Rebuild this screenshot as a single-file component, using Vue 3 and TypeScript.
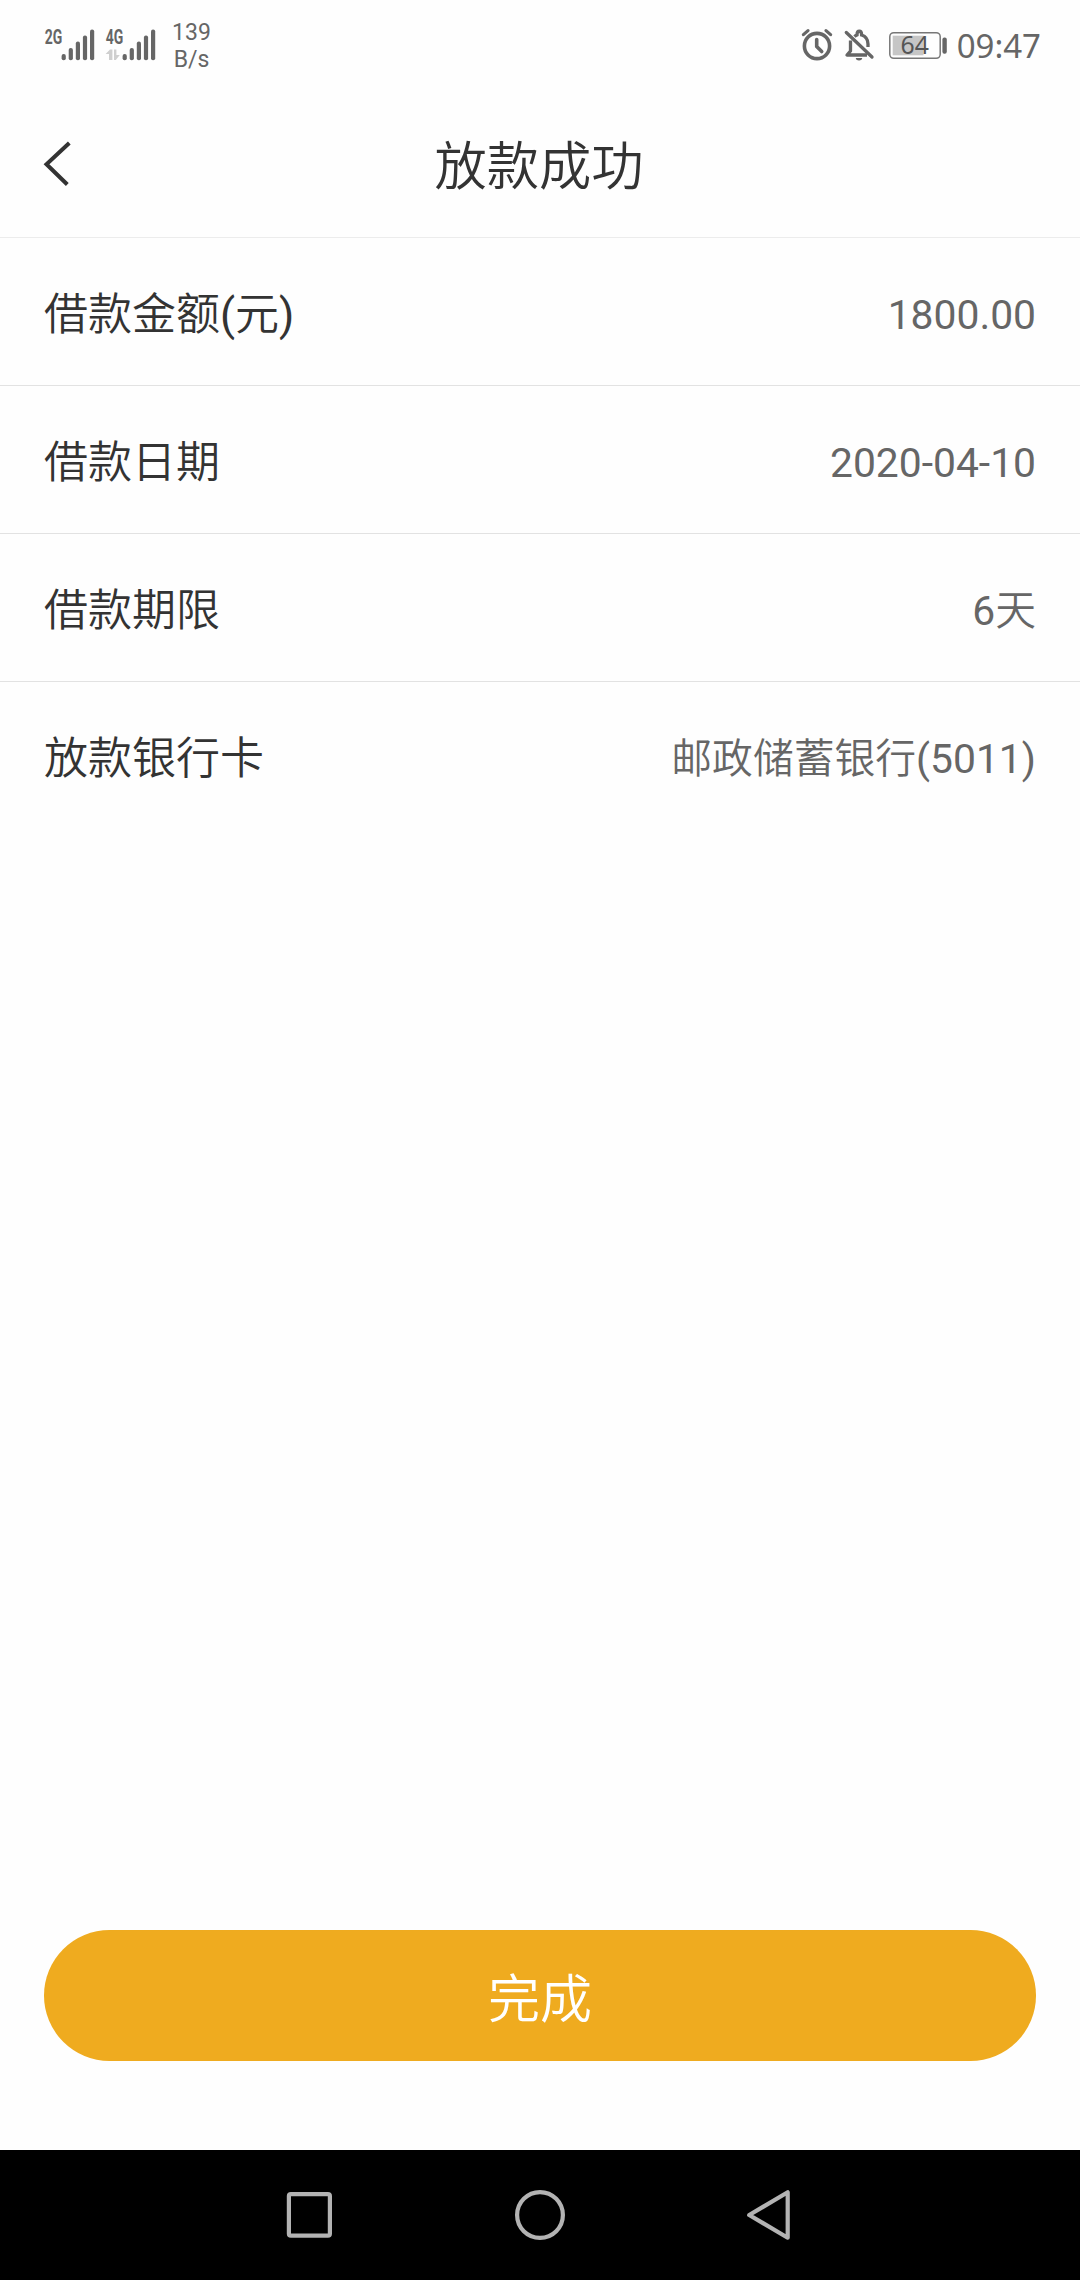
<script setup lang="ts">
interface Row {
  label: string
  value: string
}

interface Run {
  text: string
  latin: boolean
}

interface Signal {
  name: string
  data: boolean
}

const rows: Row[] = [
  { label: '借款金额(元)', value: '1800.00' },
  { label: '借款日期', value: '2020-04-10' },
  { label: '借款期限', value: '6天' },
  { label: '放款银行卡', value: '邮政储蓄银行(5011)' },
]

const signals: Signal[] = [
  { name: '2G', data: false },
  { name: '4G', data: true },
]

const barTops: number[] = [26, 20, 13.6, 7.4, 1.6]

// Latin runs are set in a slightly heavier weight than the Chinese ones.
function runs(text: string): Run[] {
  const parts = text.match(/[\x20-\x7e]+|[^\x20-\x7e]+/g) ?? []
  return parts.map((part) => ({ text: part, latin: part.charCodeAt(0) < 128 }))
}
</script>

<template>
  <div class="screen">
    <div class="status">
      <svg v-for="s in signals" :key="s.name" class="signal" width="61" height="46" viewBox="0 -10 61 46">
        <text x="0.8" y="15.6" textLength="17.5" lengthAdjust="spacingAndGlyphs">{{ s.name }}</text>
        <g v-if="s.data" fill="#cfcfcf">
          <path d="M5 21.5h2.4v10.5H4v-6H0.6z" />
          <path d="M9 21.5h2.4v5.5h3.4l-4 5H9z" />
        </g>
        <rect v-for="(t, i) in barTops" :key="t" :x="17.6 + i * 7.1" :y="t" width="4.2" :height="32.3 - t" rx="2" />
      </svg>
      <div class="speed"><span>139</span><span>B/s</span></div>
      <div class="right">
        <svg class="alarm" width="32" height="34" viewBox="801 28 32 34" fill="none" stroke="#666" stroke-width="3.6">
          <circle cx="817" cy="46" r="12.6" />
          <path d="M816.7 39.5v7l5 5" stroke-linecap="round" stroke-linejoin="round" />
          <path d="M803.4 34.6l4.6-4M830.6 34.6l-4.6-4" stroke-linecap="round" stroke-width="3.2" />
        </svg>
        <svg class="bell" width="32" height="34" viewBox="843 28 32 34" fill="none" stroke="#666" stroke-width="3.3">
          <path d="M850.5 40.5V51l-3.5 4h20" stroke-linejoin="round" />
          <path d="M854.5 36.6c0.8-0.8 1.5-1.2 2.5-1.6 0-5 4.6-5 4.6 0 4.5 1.5 6.4 4.3 6.4 9V47" />
          <path d="M846.3 32.5L872 57" stroke-linecap="round" />
          <path d="M855.8 58h6.4a3.2 2.4 0 0 1-6.4 0z" fill="#666" stroke="none" />
        </svg>
        <svg class="battery" width="60" height="46" viewBox="888 22 60 46">
          <rect x="889.8" y="32.7" width="50.4" height="25.6" rx="4" fill="none" stroke="#777" stroke-width="1.5" />
          <rect x="892.7" y="35.7" width="30.8" height="19.6" fill="#c6c6c6" />
          <rect x="942.4" y="37.6" width="4.4" height="16.2" rx="2" fill="#666" />
          <text x="900.5" y="53.8">64</text>
        </svg>
        <span class="time">09:47</span>
      </div>
    </div>
    <header class="header">
      <svg class="back" width="32" height="50" viewBox="40 139 32 50" fill="none" stroke="#333" stroke-width="4">
        <path d="M69.3 143L46.5 164.3L67.3 184.5" />
      </svg>
      <h1>放款成功</h1>
    </header>
    <main class="list">
      <div v-for="r in rows" :key="r.label" class="row">
        <span class="label"><span v-for="p in runs(r.label)" :key="p.text" :class="{ latin: p.latin }">{{ p.text }}</span></span>
        <span class="value"><span v-for="p in runs(r.value)" :key="p.text" :class="{ latin: p.latin }">{{ p.text }}</span></span>
      </div>
    </main>
    <button class="done">完成</button>
    <nav class="nav">
      <svg width="1080" height="130" viewBox="0 2150 1080 130" fill="none" stroke="#b3b3b3" stroke-width="4.2" stroke-linejoin="round">
        <rect x="288.9" y="2194.1" width="41" height="41.6" rx="2" />
        <circle cx="540" cy="2215" r="22.9" />
        <path d="M787.7 2192.3V2237.7L749.2 2215z" />
      </svg>
    </nav>
  </div>
</template>

<style>
body {
  margin: 0;
}
</style>

<style scoped>
.screen {
  width: 1080px;
  height: 2280px;
  display: flex;
  flex-direction: column;
  background: #fefefe;
  font-family: Roboto, "Noto Sans CJK SC", sans-serif;
  color: #333;
  overflow: hidden;
}
.status {
  height: 90px;
  display: flex;
  align-items: flex-start;
  padding: 0 39px 0 44px;
  color: #666;
}
.signal {
  margin-top: 18px;
  fill: #666;
  flex: none;
}
.signal text {
  font: 700 20px Roboto, sans-serif;
}
.speed {
  margin: 19px 0 0 -1.5px;
  width: 54px;
  display: flex;
  flex-direction: column;
  align-items: center;
  font-size: 23px;
  line-height: 27px;
}
.right {
  margin-left: auto;
  display: flex;
  align-items: flex-start;
}
.alarm,
.bell {
  margin-top: 28px;
}
.bell {
  margin-left: 10px;
}
.battery {
  margin: 22px 9px 0 13px;
}
.battery text {
  font: 24.8px "Noto Sans", sans-serif;
  fill: #555;
}
.time {
  margin-top: 26px;
  font-family: "Noto Sans", sans-serif;
  font-size: 33px;
  line-height: 40px;
}
.header {
  height: 147px;
  display: grid;
  grid-template-columns: 32px 1fr 34px;
  align-items: start;
  padding: 0 40px;
  border-bottom: 1px solid #ececec;
}
.back {
  margin-top: 49px;
}
h1 {
  margin: 38px 0 0;
  text-align: center;
  font-size: 52.3px;
  line-height: 78px;
  font-weight: 350;
}
.list {
  flex: 1;
}
.row {
  height: 148px;
  box-sizing: border-box;
  display: flex;
  justify-content: space-between;
  align-items: flex-start;
  padding: 5px 44px 0;
  line-height: 142px;
  border-bottom: 1px solid #e2e2e2;
  font-weight: 350;
}
.row:last-child {
  border-bottom: none;
}
.latin {
  font-weight: 400;
}
.label {
  font-size: 44px;
  padding-top: 1px;
}
.value {
  font-size: 40.8px;
  color: #666;
  padding-top: 1px;
}
.done {
  height: 131px;
  margin: 0 44px 89px;
  border: none;
  border-radius: 66px;
  background: #efab1f;
  color: #fff;
  font: 350 52px/131px "Noto Sans CJK SC", sans-serif;
  padding: 0;
}
.nav {
  height: 130px;
  background: #000;
}
.nav svg {
  display: block;
}
</style>
